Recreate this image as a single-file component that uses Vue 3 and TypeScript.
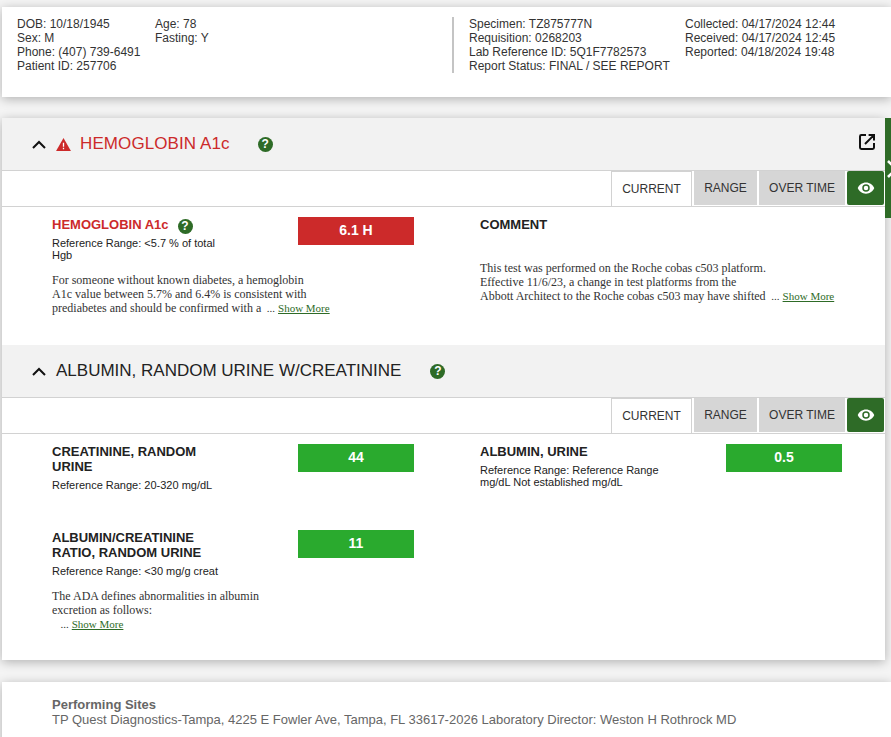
<script setup lang="ts">
interface LabResult {
  name: string
  nameFlagged?: boolean
  help?: boolean
  range: string
  value: string
  high?: boolean
  note?: string[]
  more?: string
}

interface Panel {
  title: string
  alert?: boolean
  results: LabResult[]
  comment?: string[]
}

const patientCols = [
  ['DOB: 10/18/1945', 'Sex: M', 'Phone: (407) 739-6491', 'Patient ID: 257706'],
  ['Age: 78', 'Fasting: Y'],
]
const specimenCols = [
  ['Specimen: TZ875777N', 'Requisition: 0268203', 'Lab Reference ID: 5Q1F7782573', 'Report Status: FINAL / SEE REPORT'],
  ['Collected: 04/17/2024 12:44', 'Received: 04/17/2024 12:45', 'Reported: 04/18/2024 19:48'],
]

const panels: Panel[] = [
  {
    title: 'HEMOGLOBIN A1c',
    alert: true,
    results: [
      {
        name: 'HEMOGLOBIN A1c',
        nameFlagged: true,
        help: true,
        range: 'Reference Range: <5.7 % of total Hgb',
        value: '6.1 H',
        high: true,
        note: ['For someone without known diabetes, a hemoglobin', 'A1c value between 5.7% and 6.4% is consistent with'],
        more: 'prediabetes and should be confirmed with a',
      },
    ],
    comment: [
      'This test was performed on the Roche cobas c503 platform.',
      'Effective 11/6/23, a change in test platforms from the',
    ],
  },
  {
    title: 'ALBUMIN, RANDOM URINE W/CREATININE',
    results: [
      {
        name: 'CREATININE, RANDOM URINE',
        range: 'Reference Range: 20-320 mg/dL',
        value: '44',
      },
      {
        name: 'ALBUMIN, URINE',
        range: 'Reference Range: Reference Range mg/dL Not established mg/dL',
        value: '0.5',
      },
      {
        name: 'ALBUMIN/CREATININE RATIO, RANDOM URINE',
        range: 'Reference Range: <30 mg/g creat',
        value: '11',
        note: ['The ADA defines abnormalities in albumin', 'excretion as follows:'],
        more: '',
      },
    ],
  },
]

const tabs = ['CURRENT', 'RANGE', 'OVER TIME']
</script>

<template>
  <div class="page">
    <header class="card summary">
      <div class="summary-group">
        <div v-for="(col, i) in patientCols" :key="i" class="summary-col" :class="`patient-${i}`">
          <div v-for="line in col" :key="line">{{ line }}</div>
        </div>
      </div>
      <div class="summary-group specimen">
        <div v-for="(col, i) in specimenCols" :key="i" class="summary-col" :class="`specimen-${i}`">
          <div v-for="line in col" :key="line">{{ line }}</div>
        </div>
      </div>
    </header>

    <main class="card report">
      <div class="side-tab">
        <svg class="side-chevron" viewBox="0 0 12 18" width="12" height="18"><path d="M1 1l8 8-8 8" fill="none" stroke="#fff" stroke-width="2.6" /></svg>
      </div>

      <section v-for="(panel, p) in panels" :key="panel.title" class="panel">
        <div class="panel-head">
          <svg class="chevron" viewBox="0 0 14 9" width="14" height="9"><path d="M1 8l6-6 6 6" fill="none" stroke="#111" stroke-width="2" /></svg>
          <svg v-if="panel.alert" class="alert" viewBox="0 0 16 14" width="15" height="13"><path d="M8 0L16 14H0z" fill="#cc2a2a" /><path d="M7.3 5h1.4v4.5H7.300zM7.3 10.500h1.400V12H7.300z" fill="#fff" /></svg>
          <h2 :class="{ flagged: panel.alert }">{{ panel.title }}</h2>
          <span class="help help-head">?</span>
          <svg v-if="p === 0" class="open" viewBox="0 0 16 16" width="16" height="16"><path d="M7 1H2.400A1.400 1.400 0 0 0 1 2.400v11.200A1.400 1.400 0 0 0 2.400 15h11.200a1.400 1.400 0 0 0 1.400-1.400V9M6 10l8.400-8.400M9.600 1H15v5.400" fill="none" stroke="#111" stroke-width="2" /></svg>
        </div>

        <div class="tabs">
          <button v-for="(tab, t) in tabs" :key="tab" class="tab" :class="{ active: t === 0 }">{{ tab }}</button>
          <button class="tab eye">
            <svg viewBox="0 0 24 24" width="18" height="18"><path d="M12 4.500C7 4.500 2.700 7.600 1 12c1.700 4.400 6 7.500 11 7.500s9.300-3.100 11-7.500c-1.700-4.400-6-7.500-11-7.500zM12 17a5 5 0 1 1 0-10 5 5 0 0 1 0 10zm0-8a3 3 0 1 0 0 6 3 3 0 0 0 0-6z" fill="#fff" /></svg>
          </button>
        </div>

        <div class="results" :class="`results-${p}`">
          <div v-for="r in panel.results" :key="r.name" class="result">
            <div class="result-top">
              <div class="result-info">
                <h3 :class="{ flagged: r.nameFlagged }">{{ r.name }}<span v-if="r.help" class="help help-name">?</span></h3>
                <p class="range">{{ r.range }}</p>
              </div>
              <div class="value" :class="{ high: r.high }">{{ r.value }}</div>
            </div>
            <p v-if="r.note" class="note">
              <template v-for="line in r.note" :key="line">{{ line }}<br /></template>
              <span :class="{ indent: !r.more }">{{ r.more }}</span>
              <span class="ellipsis">&nbsp; ...</span> <a class="more">Show More</a>
            </p>
          </div>

          <div v-if="panel.comment" class="result comment">
            <h3>COMMENT</h3>
            <p class="note">
              <template v-for="line in panel.comment" :key="line">{{ line }}<br /></template>
              Abbott Architect to the Roche cobas c503 may have shifted <span class="ellipsis">&nbsp;...</span> <a class="more">Show More</a>
            </p>
          </div>
        </div>
      </section>
    </main>

    <footer class="card sites">
      <strong>Performing Sites</strong>
      <div>TP Quest Diagnostics-Tampa, 4225 E Fowler Ave, Tampa, FL 33617-2026 Laboratory Director: Weston H Rothrock MD</div>
    </footer>
  </div>
</template>

<style>
html, body { margin: 0; height: 100%; overflow: hidden; background: #f4f4f4; }
</style>

<style scoped>
.page { height: 737px; overflow: hidden; padding: 7px 0 0 2px; box-sizing: border-box; font-family: "Liberation Sans", Arial, sans-serif; color: #333; }
.card { background: #fff; box-shadow: 0 2px 10px rgba(0, 0, 0, 0.28); }

.summary { height: 90px; box-sizing: border-box; padding: 10px 0 0 15px; display: flex; font-size: 12px; line-height: 14px; }
.summary-group { display: flex; }
.patient-0 { width: 138px; }
.patient-1 { width: 297px; }
.specimen { border-left: 2px solid #c4c4c4; height: 56px; padding-left: 15px; }
.specimen-0 { width: 216px; }

.report { position: relative; margin-top: 21px; width: 883px; height: 542px; }
.side-tab { position: absolute; left: 883px; top: 0; width: 6px; height: 100px; background: #2e6b27; overflow: hidden; }
.side-chevron { position: absolute; left: 2px; top: 42px; }

.panel-head { height: 52px; background: #f2f2f2; border-bottom: 1px solid #d2d2d2; display: flex; align-items: center; position: relative; }
.chevron { margin-left: 30px; }
.alert { margin-left: 10px; }
.panel-head h2 { margin: 0 0 0 9px; font-size: 17px; font-weight: 400; color: #222; line-height: 20px; }
.panel-head h2.flagged { color: #cc2a2a; letter-spacing: 0.1px; }
.panel-head:not(:has(.alert)) h2 { margin-left: 10px; }
.help { display: inline-flex; align-items: center; justify-content: center; width: 15px; height: 15px; border-radius: 50%; background: #2e6b27; color: #fff; font-size: 12px; font-weight: 700; line-height: 15px; }
.help-head { margin-left: 29px; }
.flagged + .help-head { margin-left: 28px; }
.help-name { margin: -2px 0 -2px 9px; vertical-align: -1px; }
.open { position: absolute; right: 10px; top: 16px; }

.tabs { height: 35px; border-bottom: 1px solid #d2d2d2; display: flex; justify-content: flex-end; align-items: flex-start; gap: 2px; padding-right: 1px; box-sizing: content-box; }
.tab { height: 34px; border: 0; padding: 0; font: 12px/32px "Liberation Sans", Arial, sans-serif; color: #333; background: #d6d6d6; }
.tab:nth-child(1) { width: 81px; height: 35px; background: #fff; border: 1px solid #d2d2d2; border-bottom: 0; box-sizing: border-box; line-height: 35px; }
.tab:nth-child(2) { width: 63px; }
.tab:nth-child(3) { width: 86px; }
.tab.eye { width: 37px; background: #2e6b27; border-radius: 2px; display: flex; align-items: center; justify-content: center; }

.results { display: grid; grid-template-columns: 428px 1fr; padding-left: 50px; }
.results-0 { height: 138px; padding-top: 10px; box-sizing: border-box; }
.results-1 { padding-top: 10px; }
.results-1 .result { min-height: 86px; }
.result-top { display: flex; }
.result-info { width: 246px; }
.result h3 { margin: 0; font-size: 13px; line-height: 15px; font-weight: 700; color: #222; width: 184px; }
.result h3.flagged { color: #cc2a2a; }
.comment h3 { width: auto; }
.range { margin: 5px 0 0; width: 184px; font-size: 11px; line-height: 12px; color: #222; }
.value { width: 116px; height: 28px; background: #2aaa2e; color: #fff; font-size: 14px; font-weight: 700; line-height: 26px; text-align: center; }
.value.high { background: #cc2a2a; }
.note { margin: 12px 0 0; font-family: "Liberation Serif", "Times New Roman", serif; font-size: 12px; line-height: 14px; color: #333; }
.comment .note { margin-top: 29px; }
.ellipsis { font-size: 11px; }
.more { color: #2e6b27; text-decoration: underline; font-size: 11px; }
.indent { display: inline-block; width: 3px; }

.sites { margin-top: 22px; padding: 15px 50px; height: 60px; font-size: 13px; line-height: 15px; color: #666; }
.sites strong { color: #666; }
</style>
